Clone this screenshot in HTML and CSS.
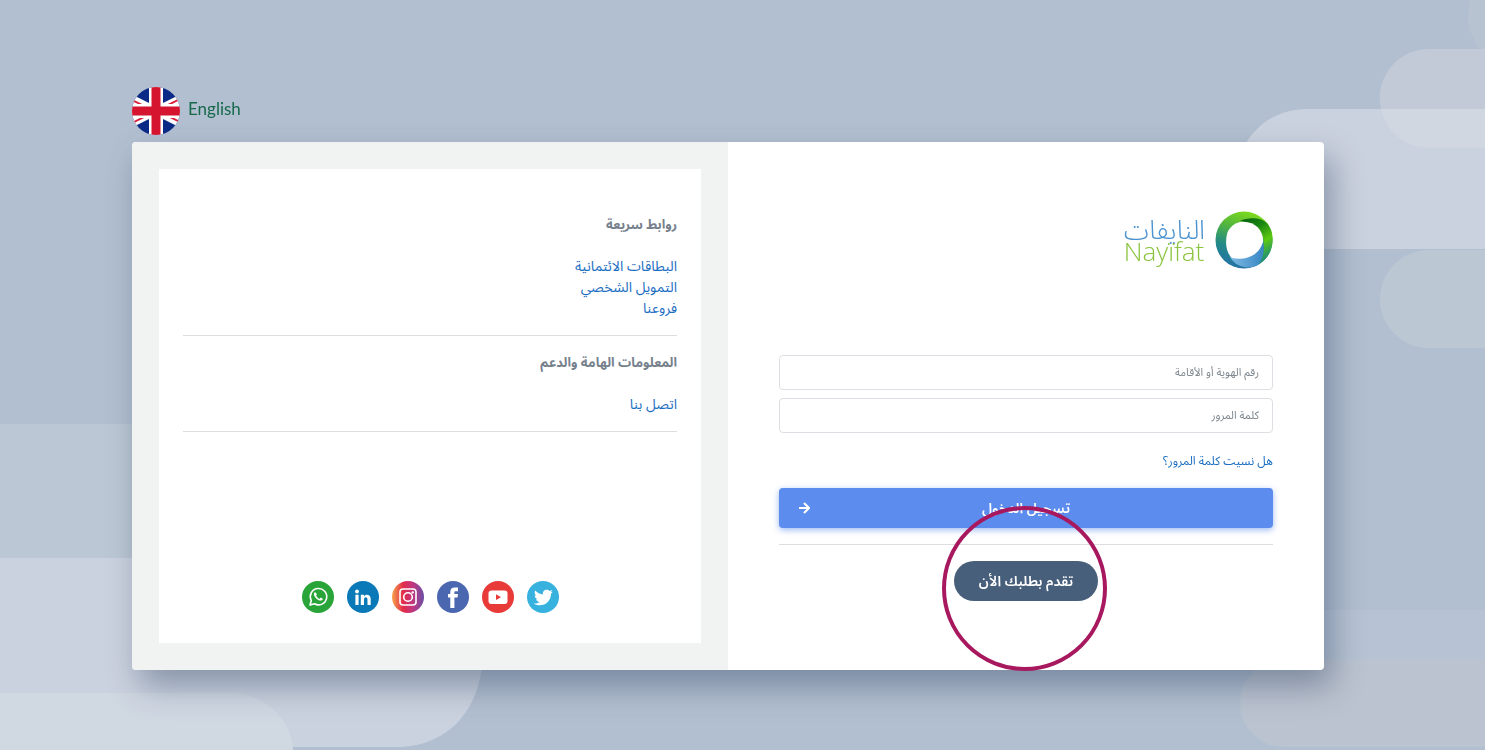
FILE: index.html
```html
<!DOCTYPE html>
<html lang="ar" dir="rtl">
<head>
<meta charset="utf-8">
<meta name="viewport" content="width=device-width, initial-scale=1">
<title>النايفات</title>
<link rel="stylesheet" href="styles.css">
</head>
<body>
<svg class="backdrop" viewBox="0 0 1485 750" preserveAspectRatio="none" aria-hidden="true">
  <rect x="-100" y="424" width="500" height="134" fill="#bbc7d4"/>
  <path d="M0 558H483V650C483 707 450 747 396 747H0Z" fill="#cbd2df"/>
  <path d="M0 693H230C265 693 292 720 293 750H0Z" fill="#d0d8e2"/>
  <rect x="1468" y="-34" width="140" height="100" rx="50" fill="#b7c3d1"/>
  <path d="M1485 109H1308C1262 109 1236 145 1236 180V249H1485Z" fill="#cbd2df"/>
  <path d="M1485 49H1429A49 49 0 0 0 1381 109H1485Z" fill="#c2c9d7"/>
  <path d="M1485 109H1381A49 49 0 0 0 1429 148H1485Z" fill="#d0d7e1"/>
  <rect x="1380" y="250" width="200" height="98" rx="49" fill="#bbc7d3"/>
  <rect x="1300" y="610" width="300" height="50" fill="#b7c3d4"/>
  <rect x="1241" y="660" width="400" height="86" rx="43" fill="#bcc3d0" stroke="#b8c5d0" stroke-width="2"/>
</svg>

<main class="page">
  <a class="language" href="#" dir="ltr" lang="en">
    <svg class="flag" viewBox="0 0 48 48" aria-hidden="true">
      <clipPath id="disc"><circle cx="24" cy="24" r="24"/></clipPath>
      <g clip-path="url(#disc)">
        <rect width="48" height="48" fill="#0b2a86"/>
        <path d="M-16 4L64 44M64 4L-16 44" stroke="#fff" stroke-width="8"/>
        <path d="M-16 5L24 25M24 24L64 4M-16 44L24 24M24 23L64 43" stroke="#d8203c" stroke-width="2"/>
        <path d="M24 0V48M0 24H48" stroke="#fff" stroke-width="14"/>
        <path d="M24 0V48M0 24H48" stroke="#d5152f" stroke-width="9"/>
      </g>
    </svg>
    <span>English</span>
  </a>

  <div class="card">
    <section class="login">
      <div class="brand">
        <svg class="ring" viewBox="0 0 58 58" aria-hidden="true">
          <defs>
            <linearGradient id="ringMain" x1="0.6" y1="0" x2="0.3" y2="1">
              <stop offset="0" stop-color="#7edb1c"/><stop offset=".3" stop-color="#55b83b"/>
              <stop offset=".65" stop-color="#228a87"/><stop offset="1" stop-color="#2571a8"/>
            </linearGradient>
            <linearGradient id="ringRight" x1="0" y1="0" x2=".5" y2="1">
              <stop offset="0" stop-color="#075e0c"/><stop offset=".35" stop-color="#168412"/>
              <stop offset=".7" stop-color="#5cc910"/><stop offset="1" stop-color="#22936d"/>
            </linearGradient>
            <linearGradient id="ringBlue" x1="0" y1="0" x2="1" y2="0">
              <stop offset="0" stop-color="#7fbbe6"/><stop offset="1" stop-color="#3886c2"/>
            </linearGradient>
          </defs>
          <circle cx="29" cy="29" r="28.500" fill="url(#ringMain)"/>
          <path d="M25 10C33 6 46 6 52 12C61 22 60 44 44 53C48 45 50 38 49 29C46 19 37 12 25 10Z" fill="url(#ringRight)"/>
          <path d="M15 46C31 50 45 42 48 30C50 38 48 48 43 54C36 58 22 58 15 46Z" fill="url(#ringBlue)"/>
          <path d="M25 11C39 9 49 19 48 31C44 44 32 50 17 47C10 41 10 28 13 20C16 15 20 12 25 11Z" fill="#fff"/>
        </svg>
        <div class="brand-name">
          <span class="brand-ar">النايفات</span>
          <span class="brand-en" dir="ltr">Nayïfat</span>
        </div>
      </div>

      <form class="form">
        <input class="field" type="text" aria-label="رقم الهوية أو الأقامة" placeholder="رقم الهوية أو الأقامة">
        <input class="field" type="password" aria-label="كلمة المرور" placeholder="كلمة المرور">
        <a class="forgot" href="#">هل نسيت كلمة المرور؟</a>
        <button class="submit" type="submit">
          <span class="submit-label">تسجيل الدخول</span>
          <svg class="arrow" viewBox="0 0 12 12" aria-hidden="true"><path d="M1 6H11M6 1L11 6L6 11" fill="none" stroke="#fff" stroke-width="2"/></svg>
        </button>
      </form>
      <hr class="rule">
      <div class="apply">
        <button class="apply-button" type="button">تقدم بطلبك الأن</button>
        <span class="highlight"></span>
      </div>
    </section>

    <aside class="side">
      <div class="panel">
        <h2 class="heading">روابط سريعة</h2>
        <ul class="links">
          <li><a href="#">البطاقات الائتمانية</a></li>
          <li><a href="#">التمويل الشخصي</a></li>
          <li><a href="#">فروعنا</a></li>
        </ul>
        <hr class="rule">
        <h2 class="heading">المعلومات الهامة والدعم</h2>
        <ul class="links">
          <li><a href="#">اتصل بنا</a></li>
        </ul>
        <hr class="rule">

        <nav class="social" dir="ltr">
          <a href="#" aria-label="WhatsApp"><svg viewBox="0 0 32 32"><circle cx="16" cy="16" r="16" fill="#29a438"/><path d="M8 24L9.300 19.500A8.200 8.200 0 1 1 12.500 22.800Z" fill="none" stroke="#fff" stroke-width="1.600" stroke-linejoin="round"/><path d="M13.400 11.200C12.600 11 11.800 12 11.900 13.200C12.300 16.200 15.600 19.500 18.700 19.600C20 19.600 21 18.700 20.800 17.700L18.700 16.600L17.500 17.900C16 17.300 14.700 16 14.100 14.500L15 13.500Z" fill="#fff"/></svg></a>
          <a href="#" aria-label="LinkedIn"><svg viewBox="0 0 32 32"><circle cx="16" cy="16" r="16" fill="#0b78b8"/><circle cx="10" cy="10.500" r="1.900" fill="#fff"/><path d="M8.400 13.800H11.600V24H8.400ZM13.800 13.800H16.900V15.300C18.300 12.800 23.700 12.700 23.700 18V24H20.500V18.600C20.500 15.500 17 15.700 17 18.600V24H13.800Z" fill="#fff"/></svg></a>
          <a href="#" aria-label="Instagram"><svg viewBox="0 0 32 32"><defs><linearGradient id="insta"><stop offset="0" stop-color="#f7a34b"/><stop offset=".35" stop-color="#e22c4b"/><stop offset=".65" stop-color="#c13680"/><stop offset="1" stop-color="#6b50a5"/></linearGradient></defs><circle cx="16" cy="16" r="16" fill="url(#insta)"/><g fill="none" stroke="#fff" stroke-width="1.600"><rect x="8" y="8" width="16" height="16" rx="3"/><circle cx="16" cy="16" r="4.300"/></g><circle cx="20.700" cy="11.400" r="1.200" fill="#fff"/></svg></a>
          <a href="#" aria-label="Facebook"><svg viewBox="0 0 32 32"><circle cx="16" cy="16" r="16" fill="#4b67af"/><path d="M13.300 27V16.500H11V12.900H13.300V11C13.300 8 15 6.600 17.700 6.600H21V10.200H18.800C17.700 10.200 17.400 10.700 17.400 11.600V12.900H21L20.500 16.500H17.400V27Z" fill="#fff"/></svg></a>
          <a href="#" aria-label="YouTube"><svg viewBox="0 0 32 32"><circle cx="16" cy="16" r="16" fill="#e93a3a"/><rect x="6.500" y="9.500" width="19" height="13.500" rx="3" fill="#fff"/><path d="M14 13.300L19 16.200L14 19.100Z" fill="#e93a3a"/></svg></a>
          <a href="#" aria-label="Twitter"><svg viewBox="0 0 32 32"><circle cx="16" cy="16" r="16" fill="#37b1de"/><path d="M6.500 22.500C9 22.600 11 22 12.500 20.900C10.700 20.700 9.500 19.700 9 18.200H10.600C8.700 17.500 7.700 16.200 7.700 14.300L9.300 14.700C7.600 13.200 7.200 11.400 8.200 9.600C10.300 12 12.900 13.300 16 13.500C15.300 10.600 17.400 8.700 19.700 8.700C20.900 8.700 22 9.200 22.700 10L25.200 9.100C24.900 10 24.400 10.700 23.700 11.200L25.800 10.700L24 12.800C24.100 19.500 19.100 24.300 12.700 24.300C10.400 24.300 8.300 23.600 6.500 22.500Z" fill="#fff"/></svg></a>
        </nav>
      </div>
    </aside>
  </div>
</main>
</body>
</html>
```
FILE: styles.css
```css
* { box-sizing: border-box; }

body {
  margin: 0;
  min-height: 100vh;
  background: #b2bfd0;
  font-family: "Noto Sans Arabic", "Noto Sans", "DejaVu Sans", sans-serif;
  font-size: 14px;
  line-height: 21px;
}

a { color: #1b6ec2; text-decoration: none; }

.backdrop {
  position: fixed;
  inset: 0;
  z-index: -1;
  width: 100%;
  height: 100%;
}

.page { padding: 87px 161px 80px 132px; }

.language {
  display: flex;
  align-items: center;
  gap: 8px;
  margin-bottom: 7px;
  color: #17694a;
  font-family: Lato, sans-serif;
  font-size: 17px;
}
.language span { padding-bottom: 6px; }

.flag { width: 48px; height: 48px; }

.card {
  display: grid;
  grid-template-columns: 1fr 1fr;
  border-radius: 4px;
  background: #fff;
  box-shadow: 8px 16px 32px rgba(50, 70, 100, 0.45);
}

.login { padding: 69px 51px; }

.brand { display: flex; gap: 10px; margin-bottom: 86px; }
.ring { width: 58px; height: 58px; }
.brand-name { display: flex; flex-direction: column; padding-top: 8px; }
.brand-ar {
  color: #4a92cf;
  font-size: 26px;
  font-weight: 300;
  line-height: 24px;
}
.brand-en {
  color: #8ac43f;
  font-family: "Open Sans", sans-serif;
  font-size: 26px;
  font-weight: 300;
  line-height: 16px;
}

.form { display: flex; flex-direction: column; gap: 8px; }

.field {
  width: 100%;
  height: 35px;
  padding: 0 13px;
  border: 1px solid #dcdfe3;
  border-radius: 4px;
  background: #fff;
  color: #495057;
  font: inherit;
  font-size: 11px;
}
.field::placeholder { color: #7e878f; opacity: 1; }

.forgot { align-self: flex-start; margin: 10px 0 8px; font-size: 12px; }

.submit {
  display: flex;
  align-items: center;
  height: 40px;
  padding: 0 19px;
  border: 0;
  border-radius: 4px;
  background: #5b8cee;
  box-shadow: 0 2px 6px rgba(91, 140, 238, 0.6);
  color: #fff;
  font: inherit;
  font-weight: 600;
}
.submit-label { flex: 1; padding-right: 12px; text-align: center; }
.arrow { width: 12px; height: 12px; }

.rule { width: 100%; height: 1px; margin: 16px 0; border: 0; background: #dcdee0; }

.apply { position: relative; display: flex; justify-content: center; }
.apply-button {
  height: 40px;
  padding: 0 25px;
  border: 0;
  border-radius: 20px;
  background: #485f7c;
  color: #fff;
  font: inherit;
  font-weight: 600;
}
.highlight {
  position: absolute;
  top: -55px;
  left: calc(50% - 84px);
  width: 165px;
  height: 165px;
  border: 4px solid #a8185f;
  border-radius: 50%;
  pointer-events: none;
}

.side {
  display: flex;
  padding: 27px;
  border-radius: 4px 0 0 4px;
  background: #f1f3f3;
}
.panel {
  display: flex;
  flex: 1;
  flex-direction: column;
  padding: 45px 24px 30px;
  background: #fff;
}

.heading {
  margin: 0 0 20px;
  color: #76808c;
  font-size: 13px;
  font-weight: 700;
  line-height: 22px;
}
.links { margin: 0; padding: 0; list-style: none; }

.social { display: flex; justify-content: center; gap: 13px; margin-top: auto; }
.social svg { display: block; width: 32px; height: 32px; }
```
